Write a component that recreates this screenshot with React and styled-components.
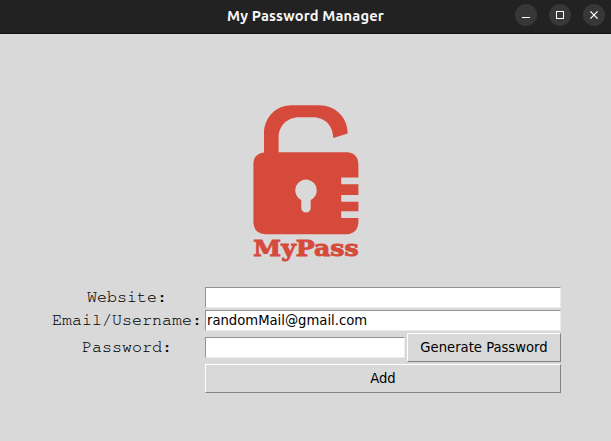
import React from 'react';
import styled, { createGlobalStyle } from 'styled-components';

const GlobalStyle = createGlobalStyle`
  * { box-sizing: border-box; }
  body { margin: 0; background: #d9d9d9; }
`;

const Window = styled.div`
  width: 611px;
  height: 441px;
  overflow: hidden;
  background: #d9d9d9;
  color: #000;
`;

const TitleBar = styled.header`
  height: 34px;
  display: grid;
  grid-template-columns: 96px 1fr 96px;
  align-items: start;
  background: #222;
  border-bottom: 1px solid #130f12;
`;

const Title = styled.h1`
  grid-column: 2;
  margin: 0;
  text-align: center;
  font: bold 14.67px/32px Ubuntu, 'Noto Sans', sans-serif;
  letter-spacing: 0.16px;
  color: #f7f7f7;
`;

const Controls = styled.div`
  display: flex;
  gap: 12px;
  padding-top: 4px;
`;

const ControlButton = styled.button`
  width: 22px;
  height: 22px;
  padding: 0;
  border: 0;
  border-radius: 50%;
  background: #373737;
  svg { display: block; }
`;

const Content = styled.main`
  padding: 64px 50px 0;
`;

const Logo = styled.svg`
  display: block;
  width: 120px;
  height: 170px;
  margin: 0 0 0 196px;
`;

const LogoText = styled.text`
  font: bold 23px 'DejaVu Serif', serif;
`;

const Form = styled.form`
  display: grid;
  grid-template-columns: 153px 356px;
  grid-template-rows: 21px 21px 29px 29px;
  row-gap: 2px;
  column-gap: 2px;
  align-items: center;
  margin-top: 19px;
`;

const Label = styled.label`
  padding-left: 1px;
  text-align: center;
  white-space: pre;
  font: 16.67px/21px 'Nimbus Mono PS', FreeMono, 'Liberation Mono', monospace;
  -webkit-text-stroke: 0.1px #000;
`;

const Entry = styled.input`
  width: ${({ $width }) => $width};
  height: 21px;
  padding: 0 0 3px 1px;
  margin: 0;
  border: 1px solid;
  border-color: #929292 #ececec #ececec #929292;
  border-radius: 0;
  outline: 0;
  background: #fff;
  color: #000;
  font: 14.67px 'DejaVu Sans Condensed', 'DejaVu Sans', sans-serif;
  font-stretch: condensed;
`;

const PasswordRow = styled.div`
  display: flex;
  align-items: center;
  gap: 2px;
`;

const Button = styled.button`
  grid-column: ${({ $column }) => $column || 'auto'};
  width: ${({ $width }) => $width};
  height: 29px;
  padding: 0 0 3px;
  border: 1px solid;
  border-color: #fff #828282 #828282 #fff;
  border-radius: 0;
  background: #d9d9d9;
  color: #000;
  white-space: nowrap;
  font: 14.67px 'DejaVu Sans Condensed', 'DejaVu Sans', sans-serif;
  font-stretch: condensed;
`;

function PadlockLogo() {
  return (
    <Logo viewBox="246 98 120 170" fill="#d64a3c" role="img" aria-label="MyPass">
      <path d="M264 155V134C264 117 276 105.3 292 105.3H319C335 105.3 347.7 117 347.7 133.6L333.2 138C333.2 126 325 117.3 313 117.3H299C287 117.3 278.6 126 278.6 138V155Z" />
      <path
        fillRule="evenodd"
        d="M265.3 152.2H346.5Q358.4 153 358.4 164.5V177.4H341.2V184.3H358.4V195.1H341.2V201.7H358.4V211.2H341.2V218H358.4V222.5Q357.8 233.5 346.5 234.3H265.3Q254 233.5 253.4 222.5V164.5Q253.4 153 265.3 152.2ZM301.3 199.9V208.2A4.7 4.2 0 0 0 310.7 208.2V199.9A10.7 10.7 0 1 0 301.3 199.9Z"
      />
      <LogoText x="253.3" y="256" textLength="105.4" lengthAdjust="spacingAndGlyphs" stroke="#d64a3c" strokeWidth="0.9">
        MyPass
      </LogoText>
    </Logo>
  );
}

function Control({ label, children }) {
  return (
    <ControlButton type="button" aria-label={label}>
      <svg width="22" height="22" viewBox="0 0 22 22" fill="none" stroke="#fff">
        {children}
      </svg>
    </ControlButton>
  );
}

export default function App() {
  return (
    <>
      <GlobalStyle />
      <Window>
        <TitleBar>
          <Title>My Password Manager</Title>
          <Controls>
            <Control label="Minimize"><path d="M7 13.5h8" /></Control>
            <Control label="Maximize"><rect x="7.5" y="7.5" width="7" height="7" /></Control>
            <Control label="Close"><path d="M7.4 7.4l7.2 7.2M14.6 7.4l-7.2 7.2" strokeWidth="1.3" /></Control>
          </Controls>
        </TitleBar>
        <Content>
          <PadlockLogo />
          <Form onSubmit={(event) => event.preventDefault()}>
            <Label htmlFor="website">Website:</Label>
            <Entry id="website" $width="356px" />
            <Label htmlFor="email">Email/Username:</Label>
            <Entry id="email" $width="356px" defaultValue="randomMail@gmail.com" />
            <Label htmlFor="password">Password:</Label>
            <PasswordRow>
              <Entry id="password" $width="200px" />
              <Button type="button" $width="154px">Generate Password</Button>
            </PasswordRow>
            <Button type="submit" $column="2" $width="356px">Add</Button>
          </Form>
        </Content>
      </Window>
    </>
  );
}
